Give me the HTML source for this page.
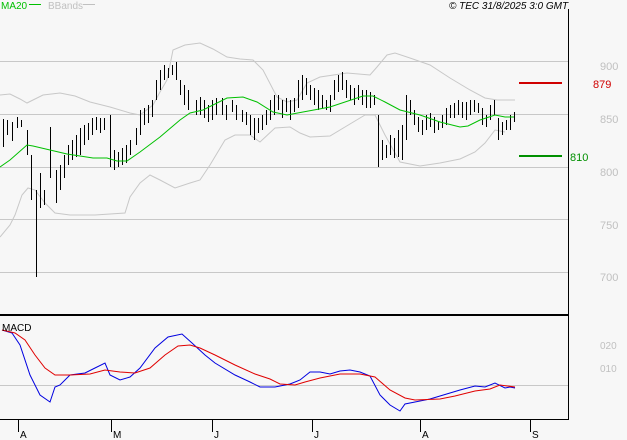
<!DOCTYPE html>
<html><head><meta charset="utf-8"><style>
html,body{margin:0;padding:0;background:#f7f7f7;}
svg{display:block;}
text{font-family:"Liberation Sans",sans-serif;}
</style></head><body>
<svg width="627" height="440" viewBox="0 0 627 440" xmlns="http://www.w3.org/2000/svg">
<rect width="627" height="440" fill="#f7f7f7"/>
<g stroke="#c8c8c8" stroke-width="1" shape-rendering="crispEdges">
<line x1="0" y1="61.5" x2="569" y2="61.5"/>
<line x1="0" y1="114.5" x2="569" y2="114.5"/>
<line x1="0" y1="167.5" x2="569" y2="167.5"/>
<line x1="0" y1="219.5" x2="569" y2="219.5"/>
<line x1="0" y1="272.5" x2="569" y2="272.5"/>
<line x1="0" y1="385.5" x2="569" y2="385.5"/>
</g>
<g font-size="11" fill="#c0c0c0">
<text x="600" y="70">900</text><text x="600" y="123">850</text><text x="600" y="176">800</text>
<text x="600" y="229">750</text><text x="600" y="281">700</text>
<text x="600" y="349" font-size="10">020</text><text x="600" y="372" font-size="10">010</text>
</g>
<!-- bands -->
<polyline fill="none" stroke="#c8c8c8" points="0,95 10,94 20,99 27,103 33,100 43,95 60,93 75,96 90,102 110,107 130,113 140,115 153,105 160,92 167,80 173,50 185,45 200,43 213,49 227,57 240,59 253,60 263,70 277,97 287,102 297,100 307,83 320,77 347,73 370,75 377,67 387,55 395,53 410,58 430,65 450,78 470,90 485,98 497,100 515,100"/>
<polyline fill="none" stroke="#c8c8c8" points="0,237 10,225 15,215 22,195 28,188 35,190 45,203 55,213 70,215 95,215 125,213 130,197 140,183 150,175 160,180 175,188 190,183 200,180 210,165 225,140 235,135 250,135 260,142 275,128 290,127 300,133 310,137 330,136 345,127 365,115 375,115 385,135 400,162 420,166 440,163 460,159 475,152 485,143 495,130 505,132"/>
<!-- bars -->
<path fill="none" stroke="#000" stroke-width="1" shape-rendering="crispEdges" d="M3.5 119V147M7.5 120V135M12.5 122V141M17.5 117V128M21.5 120V127M27.5 130V155M31.5 155V200M36.5 190V277M40.5 173V208M44.5 190V205M50.5 127V178M56.5 170V203M60.5 165V190M64.5 155V178M68.5 145V165M72.5 140V160M76.5 135V157M80.5 128V155M84.5 125V145M88.5 123V140M92.5 118V135M96.5 117V130M100.5 118V133M104.5 118V130M110.5 115V167M114.5 150V170M118.5 152V167M122.5 148V165M126.5 145V163M130.5 140V155M136.5 128V145M140.5 110V135M144.5 108V125M148.5 105V123M152.5 100V117M156.5 80V100M160.5 70V90M164.5 65V80M168.5 68V78M172.5 65V75M176.5 62V80M180.5 80V95M184.5 85V105M188.5 90V110M196.5 100V115M200.5 97V115M204.5 100V118M208.5 105V122M212.5 100V120M216.5 98V115M222.5 98V115M226.5 105V120M232.5 100V112M236.5 105V120M242.5 110V122M246.5 112V125M250.5 115V135M254.5 118V140M258.5 118V133M262.5 115V130M266.5 110V125M270.5 100V120M274.5 95V115M278.5 95V110M282.5 100V118M286.5 98V112M290.5 100V120M294.5 98V112M298.5 80V108M302.5 75V100M306.5 78V95M310.5 85V100M314.5 88V105M318.5 90V110M322.5 95V108M326.5 100V110M330.5 95V112M334.5 80V100M338.5 75V92M342.5 72V90M346.5 80V98M350.5 85V100M354.5 88V105M358.5 85V100M362.5 90V105M366.5 90V108M370.5 92V108M374.5 95V105M378.5 115V167M382.5 140V160M386.5 145V158M390.5 135V155M394.5 138V158M398.5 130V157M402.5 125V160M406.5 95V140M410.5 100V115M414.5 110V125M418.5 117V132M422.5 120V135M426.5 115V130M430.5 113V127M434.5 117V133M438.5 122V130M442.5 115V128M446.5 108V125M450.5 105V118M454.5 103V118M458.5 100V115M462.5 102V118M466.5 102V120M470.5 100V115M474.5 100V112M478.5 103V113M482.5 108V125M486.5 115V127M490.5 105V120M494.5 100V115M498.5 118V140M502.5 122V135M506.5 120V130M510.5 115V130M514.5 112V122"/>
<!-- MA20 -->
<polyline fill="none" stroke="#00c000" points="0,167 10,160 27,145 33,146 50,150 67,154 93,158 107,158 117,161 127,161 140,152 160,137 180,120 190,113 203,110 227,98 243,97 257,102 273,112 287,115 303,112 330,107 363,96 373,96 385,102 400,110 420,115 440,122 460,127 468,126 480,120 495,115 505,117 514,117"/>
<!-- support/resistance -->
<rect x="519" y="82" width="43" height="2" fill="#d00000"/>
<rect x="519" y="155" width="43" height="2" fill="#009000"/>
<text x="593" y="88" font-size="11" fill="#d00000">879</text>
<text x="570" y="161" font-size="11" fill="#009000">810</text>
<!-- frame -->
<rect x="568" y="9" width="1" height="411" fill="#000"/>
<rect x="0" y="314" width="569" height="2" fill="#000"/>
<rect x="0" y="419" width="569" height="1" fill="#000"/>
<!-- MACD -->
<polyline fill="none" stroke="#0000e0" points="2,330 12,333 20,345 30,375 40,395 50,402 55,387 60,385 70,375 85,373 95,368 105,363 110,375 120,380 130,377 140,368 155,348 168,337 182,334 192,343 205,355 215,363 235,375 250,382 260,387 275,387 280,386 290,384 300,380 310,372 320,372 330,374 340,371 350,370 360,372 370,376 380,395 390,405 400,411 405,404 415,402 430,399 440,396 460,390 475,386 485,387 495,383 505,388 510,387 515,388"/>
<polyline fill="none" stroke="#e00000" points="2,330 15,333 25,340 35,355 45,368 55,375 70,375 90,374 105,370 120,372 135,373 150,368 165,355 178,346 190,345 200,348 215,355 235,365 255,374 270,379 280,384 295,385 305,382 320,378 340,374 360,374 375,377 390,390 405,398 415,400 440,399 455,396 475,391 490,389 500,385 515,387"/>
<text x="2" y="331" font-size="10" fill="#000">MACD</text>
<!-- month ticks -->
<g fill="#000" shape-rendering="crispEdges">
<rect x="18" y="420" width="1" height="12"/><rect x="111" y="420" width="1" height="12"/><rect x="212" y="420" width="1" height="12"/>
<rect x="312" y="420" width="1" height="12"/><rect x="420" y="420" width="1" height="12"/><rect x="530" y="420" width="1" height="12"/>
</g>
<g font-size="10" fill="#000">
<text x="20" y="438">A</text><text x="113" y="438">M</text><text x="214" y="438">J</text>
<text x="314" y="438">J</text><text x="422" y="438">A</text><text x="532" y="438">S</text>
</g>
<text x="1" y="9" font-size="10" fill="#00c000">MA20</text>
<rect x="29" y="4" width="12" height="1" fill="#00c000"/>
<text x="48" y="9" font-size="10" fill="#c0c0c0">BBands</text>
<rect x="83" y="4" width="12" height="1" fill="#c0c0c0"/>
<text x="449" y="9" font-size="10" font-style="italic" fill="#000">© TEC 31/8/2025 3:0 GMT</text>
</svg>
</body></html>
